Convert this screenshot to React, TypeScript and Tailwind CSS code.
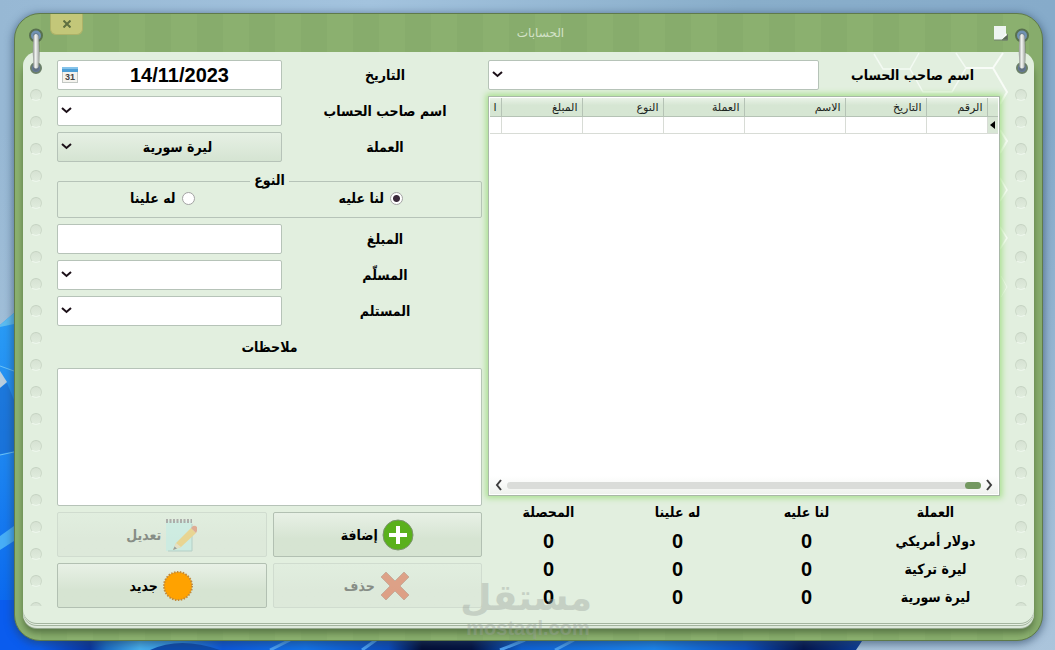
import { ReactNode, useState } from "react";

const fieldBox = "h-[30px] border border-[#b6c3b8] rounded-xs bg-white";
const boldText =
  "font-['DejaVu_Sans_Condensed','DejaVu_Sans',sans-serif] font-bold text-sm leading-6";

const Wallpaper = () => (
  <svg
    className="absolute inset-0 w-full h-full"
    viewBox="0 0 1055 650"
    preserveAspectRatio="none"
    aria-hidden="true"
  >
    <defs>
      <linearGradient id="sky" x1="0" y1="0" x2="1" y2="0">
        <stop offset="0" stopColor="#97b8d4" />
        <stop offset="0.35" stopColor="#a3c3de" />
        <stop offset="0.7" stopColor="#89aeca" />
        <stop offset="1" stopColor="#86abca" />
      </linearGradient>
      <linearGradient id="fade" x1="0" y1="0" x2="0" y2="1">
        <stop offset="0.2" stopColor="#b4cbe0" stopOpacity="0" />
        <stop offset="1" stopColor="#b4cbe0" stopOpacity="0.8" />
      </linearGradient>
      <linearGradient id="petal" x1="0" y1="0" x2="0" y2="1">
        <stop offset="0" stopColor="#2a9cf5" />
        <stop offset="0.45" stopColor="#1c84f0" />
        <stop offset="1" stopColor="#0560ee" />
      </linearGradient>
      <linearGradient id="strip" x1="0" y1="0" x2="1" y2="0">
        <stop offset="0" stopColor="#0a5cee" />
        <stop offset="0.06" stopColor="#0834a0" />
        <stop offset="0.08" stopColor="#1c6fc8" />
        <stop offset="0.12" stopColor="#49b4f2" />
        <stop offset="0.17" stopColor="#2d8ee6" />
        <stop offset="0.22" stopColor="#0b57de" />
        <stop offset="0.32" stopColor="#1274ec" />
        <stop offset="0.42" stopColor="#0a4cc0" />
        <stop offset="0.46" stopColor="#020c34" />
        <stop offset="0.52" stopColor="#02103f" />
        <stop offset="0.58" stopColor="#0d62da" />
        <stop offset="0.74" stopColor="#1b86f0" />
        <stop offset="0.85" stopColor="#0b50c4" />
        <stop offset="0.92" stopColor="#03144c" />
        <stop offset="1" stopColor="#0c43a6" />
      </linearGradient>
    </defs>
    <rect width="1055" height="650" fill="url(#sky)" />
    <rect width="1055" height="650" fill="url(#fade)" />
    <path d="M0 325 L14 313 L40 340 L40 650 L0 650 Z" fill="url(#petal)" />
    <path d="M0 325 L14 313 V324 L0 327 Z" fill="#5cbcf0" />
    <path d="M0 371 L7 382 L0 388 Z" fill="#b9cede" />
    <path d="M0 366 L14 371" stroke="#6cc2f5" fill="none" />
    <path d="M0 388 L7 383 L14 400 V451 L0 454 Z" fill="#1560c4" opacity="0.5" />
    <path d="M0 455 L14 452" stroke="#6cc2f5" fill="none" />
    <path d="M0 536 L14 526 V541 L0 550 Z" fill="#47aef6" />
    <path d="M0 600 H60 V650 H0 Z" fill="#0a5cee" />
    <path d="M40 636 H870 L862 641 L856 650 H40 Z" fill="url(#strip)" />
    <path d="M150 650 Q180 636 220 650" fill="#0c4bb0" />
    <path d="M270 650 L290 640 M362 650 L376 640 M500 650 L525 640 M555 650 L574 640" stroke="#4da4f8" strokeWidth="3" />
  </svg>
);

const Binder = ({ className }: { className: string }) => (
  <svg
    className={`absolute top-[13px] w-4 h-12 ${className}`}
    viewBox="0 0 16 48"
    aria-hidden="true"
  >
    <defs>
      <linearGradient id="metal" x1="0" y1="0" x2="1" y2="0">
        <stop offset="0" stopColor="#8c918c" />
        <stop offset="0.45" stopColor="#f4f6f4" />
        <stop offset="1" stopColor="#9aa09a" />
      </linearGradient>
    </defs>
    <circle cx="8" cy="8.500" r="6" fill="#7092b4" stroke="#58714f" strokeWidth="2" />
    <circle cx="8" cy="41" r="5" fill="#64799a" stroke="#6b7f69" strokeWidth="2" />
    <path d="M8 9 Q10 25 8 41" fill="none" stroke="#5f665f" strokeWidth="6" strokeLinecap="round" opacity="0.4" />
    <path d="M5.500 9 Q4 25 5.500 40 Q8 43 10.500 40 Q12 25 10.500 9 Q8 5 5.500 9 Z" fill="url(#metal)" />
  </svg>
);

const HoleRail = () => (
  <div className="w-[26px] shrink-0 flex flex-col items-center gap-[15px] mt-[37px] h-[517px] overflow-hidden">
    {Array.from({ length: 20 }, (_, i) => (
      <span
        key={i}
        className="w-3 h-3 shrink-0 rounded-full bg-linear-to-b from-[#d6e2d3] to-[#e0ecdd] border border-t-[#c5d2c2] border-x-[#ccd9c9] border-b-[#eef6ec]"
      />
    ))}
  </div>
);

const Hexagons = () => (
  <svg
    className="absolute right-0 top-0 w-[170px] h-[250px]"
    viewBox="864 52 170 250"
    fill="none"
    stroke="#f8fcf7"
    aria-hidden="true"
  >
    <path d="M874 54 L883 69 H910 L919 53 M910 69 L923 92 H952 L966 68 L956 53" strokeWidth="1.5" opacity="0.8" />
    <path d="M966 68 H993 L1003 53 M993 68 L1007 92 L1000 104" strokeWidth="2" />
    <path d="M1000 130 L1007 141 L1000 153" strokeWidth="2" />
    <path d="M1000 178 L1007 190 L1000 201 M1000 227 L1007 238 L1000 249" strokeWidth="1.5" />
    <path d="M1001 276 L1007 287 L1001 297" strokeWidth="1" opacity="0.7" />
  </svg>
);

const Chevron = () => (
  <svg
    className="absolute left-1 top-[9px] w-[11px] h-[10px] pointer-events-none"
    viewBox="0 0 11 10"
    fill="none"
    stroke="#1c1018"
    strokeWidth="2"
    aria-hidden="true"
  >
    <path d="M1 3 L5.500 7 L10 3" />
  </svg>
);

const Combo = ({
  id,
  options = [""],
  className = "bg-white",
}: {
  id: string;
  options?: string[];
  className?: string;
}) => (
  <div className="relative w-full">
    <select
      id={id}
      className={`appearance-none block w-full h-[30px] border border-[#b6c3b8] rounded-xs pl-4 text-center ${boldText} ${className}`}
    >
      {options.map((o) => (
        <option key={o}>{o}</option>
      ))}
    </select>
    <Chevron />
  </div>
);

const Row = ({ id, text, children }: { id: string; text: string; children: ReactNode }) => (
  <div className="flex items-center gap-1.5">
    <div className="w-[225px] shrink-0">{children}</div>
    <label htmlFor={id} dir="rtl" className={`flex-1 text-center ${boldText}`}>
      {text}
    </label>
  </div>
);

const CalendarIcon = () => (
  <svg className="w-4 h-4 shrink-0" viewBox="0 0 16 16" aria-hidden="true">
    <rect x="0.500" y="0.500" width="15" height="15" fill="#f4f3ee" stroke="#c3c8c4" />
    <rect width="16" height="5" fill="#4d9fd6" />
    <rect width="16" height="2" fill="#85c3ea" />
    <text x="8" y="13" textAnchor="middle" fontSize="9" fontWeight="700" fill="#444">
      31
    </text>
  </svg>
);

const EditIcon = () => (
  <svg className="w-8 h-[34px] opacity-50" viewBox="0 0 32 34" aria-hidden="true">
    <rect x="1" y="3" width="26" height="30" fill="#bfeee8" />
    <path d="M27 6 V33 H3" fill="none" stroke="#8fb9b4" />
    <path d="M1 3 H27" stroke="#7a6f78" strokeWidth="4" strokeDasharray="2 1.500" />
    <path d="M8 32 L11 25 L26 10 L31 15 L16 29 Z" fill="#f3c24d" />
    <path d="M26 10 L28 8 Q30 7 32 9 T32 13 L31 15 Z" fill="#e0704e" />
    <path d="M8 32 L11 25 L16 29 Z" fill="#ead9b6" />
    <path d="M8 32 L9.500 28.500 L12 30.500 Z" fill="#54585f" />
  </svg>
);

const AddIcon = () => (
  <svg className="w-8 h-8" viewBox="0 0 32 32" aria-hidden="true">
    <circle cx="16" cy="16" r="15" fill="#5ab01c" stroke="#7d9470" />
    <path d="M16 7 V25 M7 16 H25" stroke="#fff" strokeWidth="4" />
  </svg>
);

const NewIcon = () => (
  <svg className="w-8 h-8" viewBox="0 0 32 32" aria-hidden="true">
    <circle cx="16" cy="16" r="14" fill="#ffa200" />
    <circle cx="16" cy="16" r="14" fill="none" stroke="#c08a3c" strokeWidth="2" strokeDasharray="1.500 1.430" />
  </svg>
);

const DeleteIcon = () => (
  <svg className="w-8 h-8 opacity-50" viewBox="0 0 32 32" aria-hidden="true">
    <path
      d="M7 2 L16 11 L25 2 L30 7 L21 16 L30 25 L25 30 L16 21 L7 30 L2 25 L11 16 L2 7 Z"
      fill="#dd5a35"
      stroke="#b0705c"
    />
  </svg>
);

const ActionButton = ({
  text,
  icon,
  disabled = false,
}: {
  text: string;
  icon: ReactNode;
  disabled?: boolean;
}) => (
  <button
    type="button"
    dir="rtl"
    disabled={disabled}
    className={`h-[45px] flex items-center justify-center gap-1 rounded-xs border border-[#b2c0b2] bg-linear-to-b from-[#e8f1e6] to-[#d6e4d2] to-60% text-black disabled:border-[#d0dccf] disabled:from-[#e1eedf] disabled:to-[#dde9da] disabled:text-[#878d86] ${boldText}`}
  >
    {icon}
    <span>{text}</span>
  </button>
);

const KindRadio = ({
  text,
  checked,
  onChange,
}: {
  text: string;
  checked: boolean;
  onChange: () => void;
}) => (
  <label dir="rtl" className={`flex-1 flex items-center justify-center gap-1.5 ${boldText}`}>
    <input
      type="radio"
      name="kind"
      checked={checked}
      onChange={onChange}
      className="appearance-none w-[13px] h-[13px] rounded-full border border-[#a3a3a3] bg-white checked:bg-[radial-gradient(circle,#3b2b3b_3px,#fff_4px)]"
    />
    {text}
  </label>
);

const columns = [
  { name: "الرقم", width: "w-[61px]" },
  { name: "التاريخ", width: "w-[81px]" },
  { name: "الاسم", width: "w-[101px]" },
  { name: "العملة", width: "w-[81px]" },
  { name: "النوع", width: "w-[81px]" },
  { name: "المبلغ", width: "w-[81px]" },
  { name: "ا", width: "w-auto" },
];

const AccountsGrid = () => (
  <div className="h-[400px] flex flex-col border border-[#a9b8a8] bg-white p-px shadow-[0_0_6px_2px_#a9e08f]">
    <table dir="rtl" className="w-full table-fixed border-collapse text-[11px] leading-4 text-[#1b2420]">
      <thead>
        <tr className="h-[18px] bg-linear-to-b from-[#eaf3e8] to-[#d6e6d3] to-40%">
          <th className="w-[11px] border-b border-[#b5c3b5]" />
          {columns.map((c) => (
            <th
              key={c.name}
              scope="col"
              className={`${c.width} border-r border-b border-[#b5c3b5] px-1 text-right font-normal overflow-hidden`}
            >
              {c.name}
            </th>
          ))}
        </tr>
      </thead>
      <tbody>
        <tr className="h-[17px]">
          <td className="bg-[#d8e6d5] border-b border-[#d8dcd6]">
            <svg className="w-[5px] h-2 mx-auto" viewBox="0 0 5 8" aria-hidden="true">
              <path d="M5 0 V8 L0 4 Z" fill="#000" />
            </svg>
          </td>
          {columns.map((c) => (
            <td key={c.name} className="border-r border-b border-[#d8dcd6]" />
          ))}
        </tr>
      </tbody>
    </table>
    <div className="mt-auto h-[18px] flex items-center gap-1 px-1 bg-linear-to-b from-white to-[#eff2ee]">
      <svg className="w-[9px] h-3" viewBox="0 0 9 12" fill="none" stroke="#3d3d3d" strokeWidth="2" aria-hidden="true">
        <path d="M7 1 L3 6 L7 11" />
      </svg>
      <div className="flex-1 h-[7px] rounded-full bg-[#dadcd9] flex justify-end">
        <div className="w-4 rounded-full bg-[#739860]" />
      </div>
      <svg className="w-[9px] h-3" viewBox="0 0 9 12" fill="none" stroke="#3d3d3d" strokeWidth="2" aria-hidden="true">
        <path d="M2 1 L6 6 L2 11" />
      </svg>
    </div>
  </div>
);

const totals = [
  { currency: "دولار أمريكي", ours: 0, theirs: 0, net: 0 },
  { currency: "ليرة تركية", ours: 0, theirs: 0, net: 0 },
  { currency: "ليرة سورية", ours: 0, theirs: 0, net: 0 },
];

const totalCell = "font-['Liberation_Sans',sans-serif] text-xl leading-6";

const Totals = () => (
  <table dir="rtl" className={`-ml-1 w-[calc(100%+4px)] table-fixed text-center ${boldText}`}>
    <thead>
      <tr className="h-[31px]">
        <th scope="col">العملة</th>
        <th scope="col">لنا عليه</th>
        <th scope="col">له علينا</th>
        <th scope="col">المحصلة</th>
      </tr>
    </thead>
    <tbody>
      {totals.map((t) => (
        <tr key={t.currency} className="h-7">
          <th scope="row">{t.currency}</th>
          <td className={totalCell}>{t.ours}</td>
          <td className={totalCell}>{t.theirs}</td>
          <td className={totalCell}>{t.net}</td>
        </tr>
      ))}
    </tbody>
  </table>
);

const App = () => {
  const [kind, setKind] = useState("ours");

  return (
    <div className="relative min-h-screen overflow-hidden pl-[14px] pr-[12px] pt-[13px] pb-[9px] font-['Liberation_Sans','DejaVu_Sans',sans-serif] text-black">
      <Wallpaper />
      <main className="relative rounded-[26px] border border-[#5f7a4b] bg-[#89ae6d] bg-[repeating-linear-gradient(90deg,#8bb06f_0_26px,#87ac6c_26px_52px)] px-2 pb-3 shadow-[0_2px_8px_1px_#24405e99]">
        <header className="relative h-[38px] flex items-center justify-center pl-6">
          <button
            type="button"
            aria-label="إغلاق"
            className="absolute left-[27px] top-0 w-[33px] h-[21px] rounded-b-md bg-[#c3c779] border border-t-0 border-[#adb268] flex items-center justify-center"
          >
            <svg className="w-2 h-2" viewBox="0 0 8 8" stroke="#5e7040" strokeWidth="2" aria-hidden="true">
              <path d="M0.500 0.500 L7.500 7.500 M7.500 0.500 L0.500 7.500" />
            </svg>
          </button>
          <h1 dir="rtl" className="text-xs leading-5 text-[#d3e2c8]">
            الحسابات
          </h1>
          <svg className="absolute right-[26px] top-3 w-[14px] h-[15px]" viewBox="0 0 14 15" aria-hidden="true">
            <path d="M0 0 H12 V8 L8 14 H0 Z" fill="#eef4f1" />
            <path d="M14 8 L8 14 H14 Z M0 14 H13" fill="#5b6a56" stroke="#71806b" />
            <path d="M12 7 L8 13 L13 9 Z" fill="#fff" />
          </svg>
        </header>
        <div className="relative flex rounded-[14px] bg-[#e2efdf] mb-[5px] shadow-[0_1px_0_#a3b49e,0_2px_0_#e6f0e3,0_3px_0_#a3b49e,0_5px_0_#dde8da,0_6px_0_#95a88d,0_10px_6px_#5a7846]">
          <Hexagons />
          <HoleRail />
          <div className="relative flex-1 mx-2 pt-2 pb-3 grid grid-cols-[425fr_512fr] gap-1.5 items-start">
            <form className="flex flex-col gap-1.5" onSubmit={(e) => e.preventDefault()}>
              <Row id="date" text="التاريخ">
                <div className={`flex items-center px-1 ${fieldBox}`}>
                  <CalendarIcon />
                  <input
                    id="date"
                    defaultValue="14/11/2023"
                    className="flex-1 min-w-0 ml-1 text-xl leading-6 font-bold text-center outline-none"
                  />
                </div>
              </Row>
              <Row id="owner" text="اسم صاحب الحساب">
                <Combo id="owner" />
              </Row>
              <Row id="currency" text="العملة">
                <Combo
                  id="currency"
                  options={["ليرة سورية"]}
                  className="bg-linear-to-b from-[#e6f0e4] to-[#d5e4d2]"
                />
              </Row>
              <fieldset className="h-[50px] border border-[#b6c3b8] rounded-xs">
                <legend dir="rtl" className={`mx-auto px-1 h-[26px] ${boldText}`}>
                  النوع
                </legend>
                <div className="flex flex-row-reverse -mt-2 pr-1.5">
                  <KindRadio text="لنا عليه" checked={kind === "ours"} onChange={() => setKind("ours")} />
                  <KindRadio text="له علينا" checked={kind === "theirs"} onChange={() => setKind("theirs")} />
                </div>
              </fieldset>
              <Row id="amount" text="المبلغ">
                <input id="amount" className={`block w-full px-2 text-center ${fieldBox}`} />
              </Row>
              <Row id="giver" text="المسلّم">
                <Combo id="giver" />
              </Row>
              <Row id="receiver" text="المستلم">
                <Combo id="receiver" />
              </Row>
              <label
                htmlFor="notes"
                dir="rtl"
                className={`h-[30px] flex items-center justify-center ${boldText}`}
              >
                ملاحظات
              </label>
              <textarea
                id="notes"
                dir="rtl"
                className="block h-[138px] resize-none border border-[#b6c3b8] rounded-xs bg-white p-2"
              />
              <div className="grid grid-cols-2 gap-1.5">
                <ActionButton text="تعديل" icon={<EditIcon />} disabled />
                <ActionButton text="إضافة" icon={<AddIcon />} />
                <ActionButton text="جديد" icon={<NewIcon />} />
                <ActionButton text="حذف" icon={<DeleteIcon />} disabled />
              </div>
            </form>
            <section>
              <div className="flex items-center gap-1.5 mb-1.5">
                <Combo id="filter" />
                <label
                  htmlFor="filter"
                  dir="rtl"
                  className={`w-[175px] shrink-0 text-center ${boldText}`}
                >
                  اسم صاحب الحساب
                </label>
              </div>
              <AccountsGrid />
              <Totals />
            </section>
          </div>
          <HoleRail />
        </div>
        <Binder className="left-[13px]" />
        <Binder className="right-[12px]" />
        <div className="absolute left-[449px] bottom-[2px] w-[128px] text-center text-[#9aa39c] opacity-40 font-bold pointer-events-none">
          <p dir="rtl" className="text-4xl leading-10">
            مستقل
          </p>
          <p className="text-xl leading-5">mostaql.com</p>
        </div>
      </main>
    </div>
  );
};

export default App;
